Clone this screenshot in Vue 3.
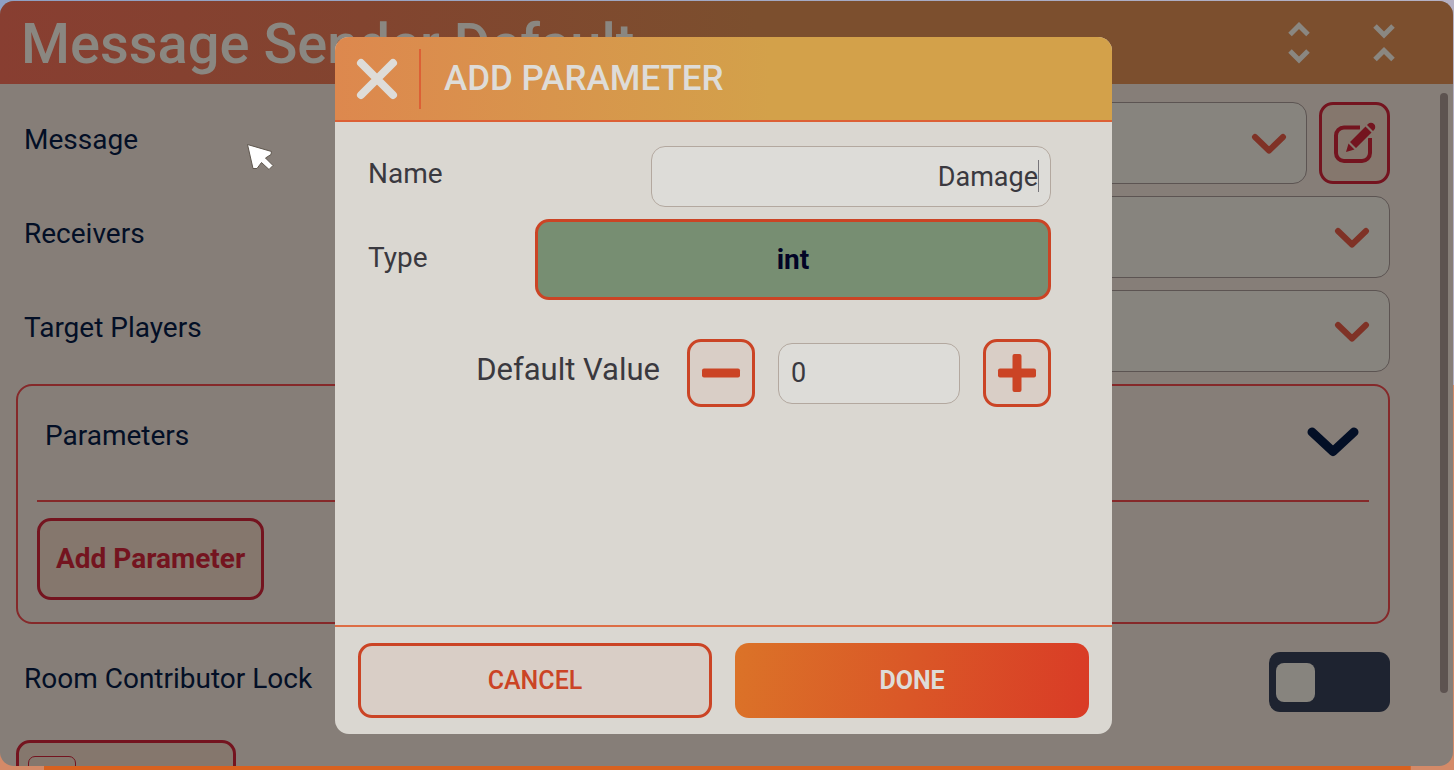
<script setup>
import { ref } from 'vue'

const selectRows = [
  { id: 'message', label: 'Message', editable: true },
  { id: 'receivers', label: 'Receivers', editable: false },
  { id: 'targets', label: 'Target Players', editable: false },
]
const name = ref('Damage')
const value = ref('0')
const locked = ref(false)
const step = (n) => {
  value.value = String((parseInt(value.value, 10) || 0) + n)
}
</script>

<template>
  <div class="scene">
    <main class="window">
      <header class="titlebar">
        <h1>Message Sender Default</h1>
        <div class="tools">
          <button type="button" class="tool">
            <svg width="22" height="42" viewBox="0 0 22 42"><path d="M2 12.500L11 3.500L20 12.500M2 29L11 38L20 29" /></svg>
          </button>
          <button type="button" class="tool">
            <svg width="22" height="42" viewBox="0 0 22 42"><path d="M2 4L11 13L20 4M2 37.500L11 28.500L20 37.500" /></svg>
          </button>
        </div>
      </header>

      <div class="content">
        <div class="fields">
          <div v-for="row in selectRows" :key="row.id" class="row">
            <label :for="row.id">{{ row.label }}</label>
            <div class="select">
              <select :id="row.id"></select>
              <svg width="36" height="24" viewBox="0 0 36 24"><path d="M4 6L18 19.500L32 6" /></svg>
            </div>
            <button v-if="row.editable" type="button" class="outlined edit">
              <svg width="44" height="44" viewBox="0 0 44 44">
                <path class="frame" d="M27 6.500H11a8 8 0 0 0-8 8V32a8 8 0 0 0 8 8H29a8 8 0 0 0 8-8V17" />
                <path class="halo" d="M14 30L17 22L35 4L40 9L22 27Z" />
                <path class="pencil" d="M13 31L15.500 22.500L21.500 28.500ZM17 21L32.500 5.500L38.500 11.500L23 27ZM34 4L35 3a4.200 4.200 0 0 1 6 6L40 10Z" />
              </svg>
            </button>
          </div>

          <section class="group">
            <div class="group-head">
              <h2>Parameters</h2>
              <svg width="54" height="34" viewBox="0 0 54 34"><path d="M6 6L27 25.500L48 6" /></svg>
            </div>
            <button type="button" class="outlined add">Add Parameter</button>
          </section>

          <div class="row lock">
            <label for="lock">Room Contributor Lock</label>
            <input id="lock" v-model="locked" type="checkbox" class="toggle" />
          </div>

          <button type="button" class="outlined more"><span></span></button>
        </div>
        <div class="scrollbar"></div>
      </div>

      <div class="overlay">
        <form class="dialog" @submit.prevent>
          <header class="dialog-head">
            <button type="button" class="close">
              <svg width="42" height="42" viewBox="0 0 42 42"><path d="M5 5L37 37M37 5L5 37" /></svg>
            </button>
            <h2>ADD PARAMETER</h2>
          </header>
          <div class="dialog-body">
            <div class="line">
              <label for="name">Name</label>
              <div class="name">
                <input id="name" v-model="name" type="text" class="box" />
                <span class="caret"></span>
              </div>
            </div>
            <div class="line type">
              <label for="type">Type</label>
              <button id="type" type="button" class="kind">int</button>
            </div>
            <div class="line default">
              <label for="value">Default Value</label>
              <button type="button" class="step" @click="step(-1)">
                <svg width="40" height="40" viewBox="0 0 40 40"><rect x="1" y="15.500" width="38" height="9" rx="2" /></svg>
              </button>
              <input id="value" v-model="value" type="text" inputmode="numeric" class="box number" />
              <button type="button" class="step" @click="step(1)">
                <svg width="40" height="40" viewBox="0 0 40 40"><rect x="1" y="15.500" width="38" height="9" rx="2" /><rect x="15.500" y="1" width="9" height="38" rx="2" /></svg>
              </button>
            </div>
          </div>
          <footer class="dialog-foot">
            <button type="button" class="cancel">CANCEL</button>
            <button type="submit" class="done">DONE</button>
          </footer>
        </form>
      </div>

      <svg class="pointer" width="28" height="30" viewBox="0 0 28 30">
        <path d="M1.500 1.500L25.500 8.500L25 11.500L19.500 15L27 22.500L23 26.500L15.500 19.500L11 25.500L7 25.500Z" />
      </svg>
    </main>
  </div>
</template>

<style>
body {
  margin: 0;
}
</style>

<style scoped>
* {
  box-sizing: border-box;
}
.scene {
  height: 100vh;
  padding: 1px 1px 4px 0;
  font-family: Roboto, "Liberation Sans", sans-serif;
  font-size: 28px;
  line-height: 36px;
  background:
    linear-gradient(#d8611f, #d8611f) center bottom / 94% 4px no-repeat,
    linear-gradient(#d48a68, #d48a68) center bottom / 100% 50% no-repeat,
    linear-gradient(90deg, #8fa0c4, #b5b1c4);
}
.window {
  position: relative;
  display: flex;
  flex-direction: column;
  height: 100%;
  overflow: hidden;
  border-radius: 14px;
  background: #867e78;
  color: #030f26;
}
button,
input,
select {
  margin: 0;
  font: inherit;
  outline: none;
}
button {
  display: flex;
  align-items: center;
  justify-content: center;
  padding: 0;
  cursor: pointer;
}
h1,
h2 {
  margin: 0;
  font-weight: 500;
}
svg {
  display: block;
  flex: none;
}
.titlebar {
  display: flex;
  flex: none;
  align-items: center;
  justify-content: space-between;
  height: 83px;
  padding: 0 58px 0 21px;
  background: linear-gradient(90deg, #883e31, #82442f 25%, #7c4f2e 52%);
  color: #8a8781;
}
.titlebar h1 {
  font-size: 56px;
  line-height: 64px;
  padding-top: 2px;
}
.tools {
  display: flex;
  gap: 63px;
}
.tool {
  border: 0;
  background: none;
}
.tool path {
  fill: none;
  stroke: #8a8781;
  stroke-width: 5;
}
.content {
  display: flex;
  gap: 50px;
  padding: 18px 5px 0 16px;
}
.fields {
  display: flex;
  flex: 1;
  flex-direction: column;
  gap: 12px;
}
.row {
  display: flex;
  align-items: center;
  gap: 12px;
  height: 82px;
}
.row label {
  flex: 1;
  padding: 0 0 6px 8px;
}
.select {
  position: relative;
  display: flex;
  flex: 1;
  align-items: center;
  height: 100%;
}
.select select {
  width: 100%;
  height: 100%;
  border: 1px solid #5c5452;
  border-radius: 14px;
  background: #87847e;
  appearance: none;
}
.select svg {
  position: absolute;
  right: 20px;
  pointer-events: none;
}
.select path,
.group-head path {
  fill: none;
  stroke: #7f3226;
  stroke-width: 6;
  stroke-linecap: round;
  stroke-linejoin: round;
}
.outlined {
  border: 3px solid #74141f;
  border-radius: 14px;
  background: #85776d;
  color: #74141f;
}
.edit {
  width: 71px;
  height: 100%;
}
.frame {
  fill: none;
  stroke: #74141f;
  stroke-width: 4;
}
.halo {
  fill: #85776d;
  stroke: #85776d;
  stroke-width: 5;
}
.pencil {
  fill: #74141f;
}
.group {
  height: 240px;
  padding: 0 19px;
  border: 2px solid #85292a;
  border-radius: 16px;
}
.group-head {
  display: flex;
  align-items: center;
  justify-content: space-between;
  height: 116px;
  padding: 0 9px 0 8px;
  border-bottom: 2px solid #85292a;
}
.group-head h2 {
  font-size: 28px;
  font-weight: 400;
  padding-bottom: 14px;
}
.group-head path {
  stroke: #030f26;
  stroke-width: 9;
}
.add {
  height: 82px;
  margin-top: 16px;
  padding: 0 16px;
  font-size: 28px;
  font-weight: 700;
}
.lock {
  margin-top: 5px;
}
.lock label {
  padding-bottom: 6px;
}
.toggle {
  width: 121px;
  height: 60px;
  border-radius: 11px;
  background: #1e2330;
  appearance: none;
}
.toggle::before {
  content: "";
  display: block;
  width: 39px;
  height: 39px;
  margin: 11px 7px;
  border-radius: 8px;
  background: #87847e;
}
.toggle:checked::before {
  margin-left: auto;
}
.more {
  align-items: flex-start;
  justify-content: flex-start;
  width: 220px;
  height: 82px;
  margin-top: 5px;
  padding: 13px 9px;
}
.more span {
  width: 48px;
  height: 48px;
  border: 1px solid #74141f;
  border-radius: 7px;
}
.scrollbar {
  width: 8px;
  height: 600px;
  margin-top: -9px;
  border-radius: 4px;
  background: #5d5350;
}
.overlay {
  position: absolute;
  inset: 0;
  display: flex;
  align-items: center;
  justify-content: center;
  padding: 4px 6px 0 0;
}
.dialog {
  display: flex;
  flex-direction: column;
  width: 777px;
  max-width: 90%;
  overflow: hidden;
  border-radius: 14px;
  background: #dad7d1;
  color: #3a393f;
}
.dialog-head {
  display: flex;
  align-items: center;
  height: 85px;
  border-bottom: 2px solid #dc6035;
  background: linear-gradient(90deg, #dd884e, #d3a14a 56%);
  color: #dedcd8;
}
.dialog-head h2 {
  padding-left: 23px;
  font-size: 35px;
  line-height: 44px;
}
.close {
  width: 86px;
  height: 60px;
  border: 0;
  border-right: 2px solid #dc6035;
  background: none;
}
.close path {
  fill: none;
  stroke: #dedcd8;
  stroke-width: 8;
  stroke-linecap: round;
}
.dialog-body {
  display: flex;
  flex-direction: column;
  padding: 24px 61px 218px 33px;
}
.line {
  display: flex;
  align-items: center;
  justify-content: space-between;
}
.line label {
  padding-bottom: 6px;
}
.name {
  position: relative;
  width: 400px;
}
.box {
  width: 100%;
  height: 61px;
  padding: 0 12px;
  border: 1px solid #b3a89f;
  border-radius: 14px;
  background: #dddcd8;
  color: #3a393f;
  font-size: 27px;
}
.name .box {
  text-align: right;
  caret-color: transparent;
}
.caret {
  position: absolute;
  top: 14px;
  right: 12px;
  width: 1px;
  height: 32px;
  background: #77757a;
}
.type {
  margin-top: 12px;
}
.kind {
  width: 516px;
  height: 81px;
  border: 3px solid #cb4425;
  border-radius: 14px;
  background: #778e72;
  color: #020426;
  font-weight: 700;
}
.type label {
  padding-bottom: 4px;
}
.default {
  justify-content: flex-end;
  gap: 23px;
  margin-top: 39px;
}
.default label {
  padding-right: 4px;
  font-size: 31px;
}
.step {
  width: 68px;
  height: 68px;
  border: 3px solid #cb4425;
  border-radius: 14px;
  background: #d9cec6;
}
.step rect {
  fill: #cb4425;
}
.number {
  width: 182px;
}
.dialog-foot {
  display: grid;
  grid-template-columns: 1fr 1fr;
  gap: 23px;
  padding: 16px 23px;
  border-top: 2px solid #dd6d45;
}
.dialog-foot button {
  height: 75px;
  border-radius: 14px;
  font-size: 25px;
  font-weight: 500;
}
.cancel {
  border: 3px solid #cb4425;
  background: #d9cec6;
  color: #cb4425;
}
.dialog-foot .done {
  border: 0;
  background: linear-gradient(100deg, #db7328, #d93b26);
  color: #dedcd8;
  font-weight: 700;
}
.pointer {
  position: absolute;
  top: 142px;
  left: 246px;
}
.pointer path {
  fill: #fff;
  stroke: #5f574e;
  stroke-width: 1;
  stroke-linejoin: round;
}
</style>
